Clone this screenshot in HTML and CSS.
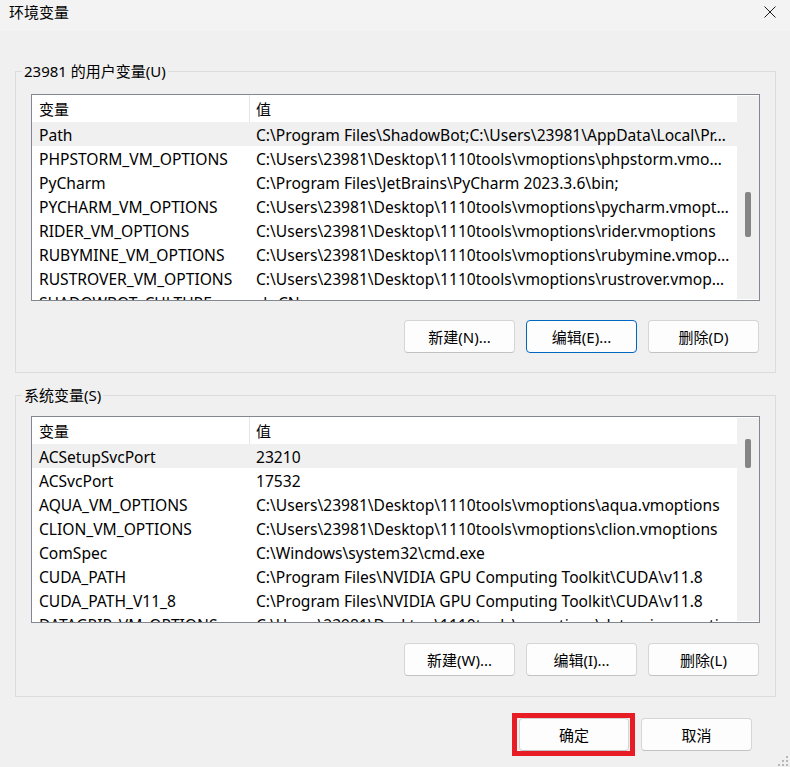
FILE: index.html
```html
<!DOCTYPE html>
<html lang="zh-CN">
<head>
<meta charset="utf-8">
<title>环境变量</title>
<link rel="stylesheet" href="styles.css">
</head>
<body>
<div class="window">
  <div class="titlebar">
    <span class="title">环境变量</span>
    <svg class="close" width="12" height="12" viewBox="0 0 12 12"><path d="M0.5 0.5 L11.5 11.5 M11.5 0.5 L0.5 11.5" stroke="#1a1a1a" stroke-width="1" fill="none"/></svg>
  </div>
  <div class="main">
    <fieldset class="group group-user">
      <legend>23981 的用户变量(U)</legend>
      <div class="listbox">
        <div class="table">
          <div class="row head"><div class="c1">变量</div><div class="c2">值</div></div>
          <div class="row sel"><div class="c1">Path</div><div class="c2">C:\Program Files\ShadowBot;C:\Users\23981\AppData\Local\Pr…</div></div>
          <div class="row"><div class="c1">PHPSTORM_VM_OPTIONS</div><div class="c2">C:\Users\23981\Desktop\1110tools\vmoptions\phpstorm.vmo…</div></div>
          <div class="row"><div class="c1">PyCharm</div><div class="c2">C:\Program Files\JetBrains\PyCharm 2023.3.6\bin;</div></div>
          <div class="row"><div class="c1">PYCHARM_VM_OPTIONS</div><div class="c2">C:\Users\23981\Desktop\1110tools\vmoptions\pycharm.vmopt…</div></div>
          <div class="row"><div class="c1">RIDER_VM_OPTIONS</div><div class="c2">C:\Users\23981\Desktop\1110tools\vmoptions\rider.vmoptions</div></div>
          <div class="row"><div class="c1">RUBYMINE_VM_OPTIONS</div><div class="c2">C:\Users\23981\Desktop\1110tools\vmoptions\rubymine.vmop…</div></div>
          <div class="row"><div class="c1">RUSTROVER_VM_OPTIONS</div><div class="c2">C:\Users\23981\Desktop\1110tools\vmoptions\rustrover.vmop…</div></div>
          <div class="row"><div class="c1">SHADOWBOT_CULTURE</div><div class="c2">zh-CN</div></div>
        </div>
        <div class="scrollbar"><div class="thumb thumb-user"></div></div>
      </div>
      <div class="btnrow">
        <button class="btn">新建(N)...</button>
        <button class="btn focus">编辑(E)...</button>
        <button class="btn">删除(D)</button>
      </div>
    </fieldset>

    <fieldset class="group group-sys">
      <legend>系统变量(S)</legend>
      <div class="listbox">
        <div class="table">
          <div class="row head"><div class="c1">变量</div><div class="c2">值</div></div>
          <div class="row sel"><div class="c1">ACSetupSvcPort</div><div class="c2">23210</div></div>
          <div class="row"><div class="c1">ACSvcPort</div><div class="c2">17532</div></div>
          <div class="row"><div class="c1">AQUA_VM_OPTIONS</div><div class="c2">C:\Users\23981\Desktop\1110tools\vmoptions\aqua.vmoptions</div></div>
          <div class="row"><div class="c1">CLION_VM_OPTIONS</div><div class="c2">C:\Users\23981\Desktop\1110tools\vmoptions\clion.vmoptions</div></div>
          <div class="row"><div class="c1">ComSpec</div><div class="c2">C:\Windows\system32\cmd.exe</div></div>
          <div class="row"><div class="c1">CUDA_PATH</div><div class="c2">C:\Program Files\NVIDIA GPU Computing Toolkit\CUDA\v11.8</div></div>
          <div class="row"><div class="c1">CUDA_PATH_V11_8</div><div class="c2">C:\Program Files\NVIDIA GPU Computing Toolkit\CUDA\v11.8</div></div>
          <div class="row"><div class="c1">DATAGRIP_VM_OPTIONS</div><div class="c2">C:\Users\23981\Desktop\1110tools\vmoptions\datagrip.vmoptions</div></div>
        </div>
        <div class="scrollbar"><div class="thumb thumb-sys"></div></div>
      </div>
      <div class="btnrow">
        <button class="btn">新建(W)...</button>
        <button class="btn">编辑(I)...</button>
        <button class="btn">删除(L)</button>
      </div>
    </fieldset>

    <div class="footer">
      <div class="highlight"><button class="btn">确定</button></div>
      <button class="btn">取消</button>
    </div>
  </div>
  <svg class="grip" width="12" height="12" viewBox="0 0 12 12">
    <rect x="9" y="1" width="2" height="2" fill="#b8b8b8"/>
    <rect x="5" y="5" width="2" height="2" fill="#b8b8b8"/>
    <rect x="9" y="5" width="2" height="2" fill="#b8b8b8"/>
    <rect x="1" y="9" width="2" height="2" fill="#b8b8b8"/>
    <rect x="5" y="9" width="2" height="2" fill="#b8b8b8"/>
    <rect x="9" y="9" width="2" height="2" fill="#b8b8b8"/>
  </svg>
</div>
</body>
</html>
```

FILE: styles.css
```css
html, body {
  margin: 0;
  padding: 0;
}
body {
  background: #f0f0f0;
  font-family: "Noto Sans", "Noto Sans CJK SC", sans-serif;
  font-size: 15px;
  color: #000;
  width: 790px;
  height: 767px;
  overflow: hidden;
}
.window {
  position: relative;
  width: 790px;
  height: 767px;
}
.titlebar {
  height: 31px;
  background: #f3f3f3;
  display: flex;
  justify-content: space-between;
  align-items: flex-start;
  padding: 0 14px 0 9px;
  box-sizing: border-box;
}
.title {
  font-family: "Noto Sans CJK SC", sans-serif;
  font-size: 15px;
  line-height: 24px;
}
.close {
  margin-top: 6px;
}
.main {
  padding: 30px 14px 0 15px;
}
.group {
  margin: 0;
  border: 1px solid #dcdcdc;
  padding: 13px 15px 19px 15px;
  min-width: 0;
}
.group-sys {
  margin-top: 12px;
  padding-top: 11px;
  padding-bottom: 20px;
}
.group legend {
  font-family: "Noto Sans", "Noto Sans CJK SC", sans-serif;
  font-size: 15px;
  line-height: 20px;
  padding: 0 2px;
  margin-left: -9px;
}
.listbox {
  display: flex;
  height: 207px;
  border: 1px solid #828790;
  background: #fff;
  box-sizing: border-box;
}
.table {
  flex: 1;
  overflow: hidden;
}
.row {
  display: flex;
  height: 24px;
  box-sizing: border-box;
  padding-top: 2px;
  align-items: center;
  white-space: nowrap;
  font-size: 15.6px;
}
.row.head {
  height: 27px;
  padding-top: 0;
  font-size: 15px;
}
.row.sel {
  background: #f0f0f0;
}
.c1 {
  width: 217px;
  flex: none;
  padding-left: 7px;
  box-sizing: border-box;
  overflow: hidden;
}
.c2 {
  padding-left: 7px;
  overflow: hidden;
}
.head .c1, .head .c2 {
  font-family: "Noto Sans CJK SC", sans-serif;
}
.head .c2 {
  border-left: 1px solid #e5e5e5;
  padding-left: 6px;
  align-self: stretch;
  display: flex;
  align-items: center;
  flex: 1;
}
.scrollbar {
  width: 22px;
  flex: none;
  background: #f0f0f0;
  margin: 1px 0 1px 0;
}
.thumb {
  width: 6px;
  margin-left: 8px;
  background: #858585;
  border-radius: 2px;
}
.thumb-user {
  margin-top: 96px;
  height: 45px;
}
.thumb-sys {
  margin-top: 21px;
  height: 29px;
}
.btnrow {
  display: flex;
  justify-content: flex-end;
  gap: 11px;
  margin-top: 19px;
  padding-right: 1px;
}
.group-sys .btnrow {
  margin-top: 20px;
}
.btn {
  width: 111px;
  height: 33px;
  box-sizing: border-box;
  background: #fdfdfd;
  border: 1px solid #d5d5d5;
  border-bottom-color: #c2c2c2;
  border-radius: 4px;
  font-family: "Noto Sans", "Noto Sans CJK SC", sans-serif;
  font-size: 15px;
  color: #000;
  padding: 0;
}
.btn.focus {
  border-color: #0067c0;
}
.footer {
  display: flex;
  justify-content: flex-end;
  align-items: flex-start;
  gap: 6px;
  margin-top: 16px;
  padding-right: 24px;
}
.footer .btn {
  margin-top: 5px;
  width: 111px;
}
.highlight {
  border: 5px solid #e81c24;
  padding: 0 1px 0 2px;
  display: flex;
}
.highlight .btn {
  margin-top: 0;
  width: 110px;
}
.grip {
  position: absolute;
  right: 1px;
  bottom: 0;
}
```
